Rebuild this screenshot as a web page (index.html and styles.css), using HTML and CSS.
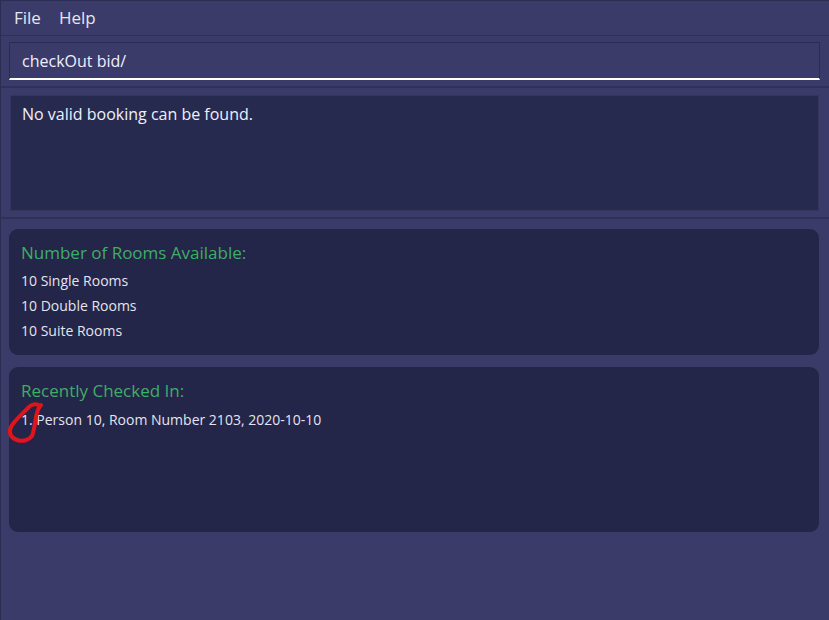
FILE: index.html
```html
<!DOCTYPE html>
<html lang="en">
<head>
<meta charset="utf-8">
<title>Hotel App</title>
<link rel="stylesheet" href="styles.css">
</head>
<body>
<div class="window">
  <div class="menubar">
    <span class="menu-item">File</span>
    <span class="menu-item">Help</span>
  </div>
  <div class="command-pane">
    <div class="command-box">checkOut bid/</div>
  </div>
  <div class="result-pane">
    <div class="result-box">No valid booking can be found.</div>
  </div>
  <div class="cards">
    <div class="card card-rooms">
      <div class="card-title">Number of Rooms Available:</div>
      <div class="card-line">10 Single Rooms</div>
      <div class="card-line">10 Double Rooms</div>
      <div class="card-line">10 Suite Rooms</div>
    </div>
    <div class="card card-recent">
      <div class="card-title">Recently Checked In:</div>
      <div class="card-line">1. Person 10, Room Number 2103, 2020-10-10</div>
    </div>
  </div>
  <svg class="scribble" width="50" height="50" viewBox="0 0 50 50" aria-hidden="true">
    <path d="M39 5 C35 2 30 3 27 7 C21 13 13 20 10 26 C7 32 10 37 16 39 C22 41 28 39 31 35 C33 30 34 22 35 16 C36 11 37 7 40 4" fill="none" stroke="#e0141c" stroke-width="4" stroke-linecap="round" stroke-linejoin="round"/>
  </svg>
</div>
</body>
</html>
```

FILE: styles.css
```css
html, body {
  margin: 0;
  padding: 0;
}
body {
  background: #3a3b68;
  font-family: "Open Sans", "Noto Sans", sans-serif;
  color: #ececf4;
}
.window {
  position: relative;
  width: 829px;
  height: 620px;
  box-sizing: border-box;
  border-top: 1px solid #2c2d52;
  border-left: 1px solid #2c2d52;
  background: #3a3b68;
  display: flex;
  flex-direction: column;
}
.menubar {
  height: 35px;
  display: flex;
  align-items: center;
  gap: 18px;
  padding-left: 13px;
  padding-bottom: 1px;
  border-bottom: 1px solid #303158;
  font-size: 17px;
  color: #e6e6f0;
  box-sizing: border-box;
}
.command-pane {
  padding: 6px 9px 6px 8px;
  border-bottom: 2px solid #303158;
}
.command-box {
  height: 38px;
  box-sizing: border-box;
  border: 1px solid #2b2c50;
  border-bottom: 2px solid #ffffff;
  padding: 0 12px;
  display: flex;
  align-items: center;
  font-size: 16px;
  color: #eef0ff;
  background: #3a3b68;
}
.result-pane {
  padding: 7px 10px 6px 9px;
  border-bottom: 2px solid #303158;
}
.result-box {
  height: 116px;
  box-sizing: border-box;
  border: 1px solid #34365e;
  background: #272a4f;
  padding: 7px 11px;
  font-size: 16px;
  color: #eef0ff;
}
.cards {
  padding: 10px 10px 0 8px;
  display: flex;
  flex-direction: column;
  gap: 12px;
}
.card {
  background: #232549;
  border-radius: 9px;
  padding: 12px 12px 10px;
  box-sizing: border-box;
}
.card-rooms {
  height: 126px;
}
.card-recent {
  height: 165px;
}
.card-title {
  color: #3fae64;
  font-size: 17px;
  line-height: 24px;
  margin-bottom: 3px;
}
.card-recent .card-title {
  margin-bottom: 4px;
}
.card-line {
  font-size: 14px;
  line-height: 25px;
  color: #e4e4ee;
}
.scribble {
  position: absolute;
  left: 0;
  top: 400px;
}
```
